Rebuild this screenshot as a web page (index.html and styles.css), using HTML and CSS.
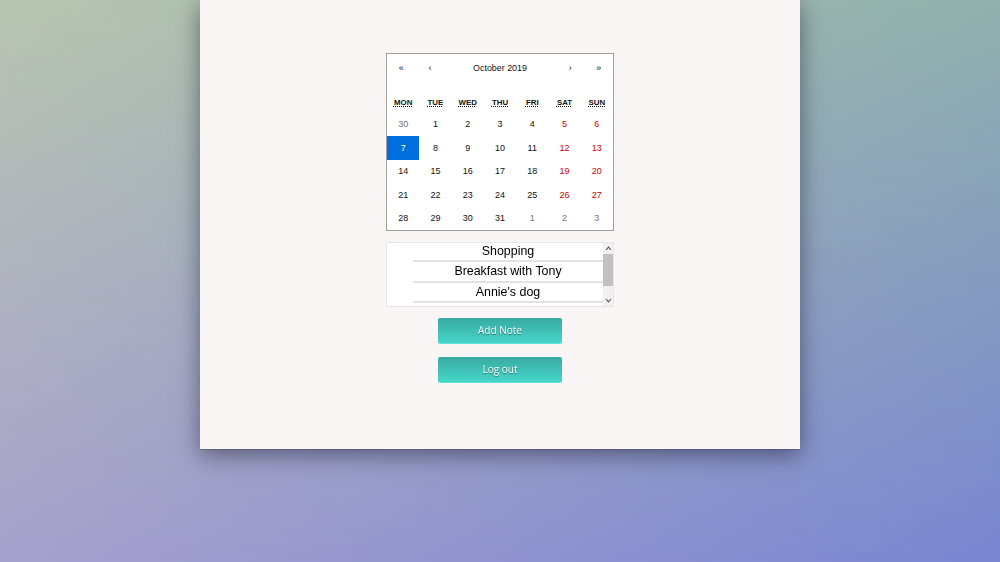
FILE: index.html
```html
<!DOCTYPE html>
<html lang="en">
<head>
<meta charset="utf-8">
<title>Notes Calendar</title>
<link rel="stylesheet" href="styles.css">
</head>
<body>
<main class="panel">
  <div class="calendar">
    <div class="cal-nav">
      <button class="nav-btn">«</button>
      <button class="nav-btn">‹</button>
      <button class="nav-label">October 2019</button>
      <button class="nav-btn">›</button>
      <button class="nav-btn">»</button>
    </div>
    <div class="weekdays">
      <div class="wd"><abbr title="Monday">Mon</abbr></div>
      <div class="wd"><abbr title="Tuesday">Tue</abbr></div>
      <div class="wd"><abbr title="Wednesday">Wed</abbr></div>
      <div class="wd"><abbr title="Thursday">Thu</abbr></div>
      <div class="wd"><abbr title="Friday">Fri</abbr></div>
      <div class="wd"><abbr title="Saturday">Sat</abbr></div>
      <div class="wd"><abbr title="Sunday">Sun</abbr></div>
    </div>
    <div class="days">
      <button class="tile other">30</button>
      <button class="tile">1</button>
      <button class="tile">2</button>
      <button class="tile">3</button>
      <button class="tile">4</button>
      <button class="tile weekend">5</button>
      <button class="tile weekend">6</button>

      <button class="tile active">7</button>
      <button class="tile">8</button>
      <button class="tile">9</button>
      <button class="tile">10</button>
      <button class="tile">11</button>
      <button class="tile weekend">12</button>
      <button class="tile weekend">13</button>

      <button class="tile">14</button>
      <button class="tile">15</button>
      <button class="tile">16</button>
      <button class="tile">17</button>
      <button class="tile">18</button>
      <button class="tile weekend">19</button>
      <button class="tile weekend">20</button>

      <button class="tile">21</button>
      <button class="tile">22</button>
      <button class="tile">23</button>
      <button class="tile">24</button>
      <button class="tile">25</button>
      <button class="tile weekend">26</button>
      <button class="tile weekend">27</button>

      <button class="tile">28</button>
      <button class="tile">29</button>
      <button class="tile">30</button>
      <button class="tile">31</button>
      <button class="tile other">1</button>
      <button class="tile other">2</button>
      <button class="tile other">3</button>
    </div>
  </div>

  <div class="notes">
    <ul class="note-list">
      <li class="note">Shopping</li>
      <li class="note">Breakfast with Tony</li>
      <li class="note">Annie's dog</li>
    </ul>
    <div class="scrollbar">
      <div class="sb-btn">
        <svg width="7" height="5" viewBox="0 0 7 5"><path d="M1 4 L3.5 1.2 L6 4" fill="none" stroke="#505050" stroke-width="1.1"/></svg>
      </div>
      <div class="sb-thumb"></div>
      <div class="sb-rest"></div>
      <div class="sb-btn">
        <svg width="7" height="5" viewBox="0 0 7 5"><path d="M1 1 L3.5 3.8 L6 1" fill="none" stroke="#505050" stroke-width="1.1"/></svg>
      </div>
    </div>
  </div>

  <button class="action">Add Note</button>
  <button class="action">Log out</button>
</main>
</body>
</html>
```

FILE: styles.css
```css
html {
  height: 100%;
  background: linear-gradient(to right, #a7a1cd, #7a86d2);
}

body {
  margin: 0;
  height: 562px;
  overflow: hidden;
  display: flex;
  justify-content: center;
  align-items: flex-start;
}

body::before {
  content: "";
  position: fixed;
  inset: 0;
  z-index: -1;
  background: linear-gradient(to right, #b8c5b0, #90b1ac);
  -webkit-mask-image: linear-gradient(to bottom, #000, transparent);
  mask-image: linear-gradient(to bottom, #000, transparent);
}

.panel {
  width: 600px;
  height: 449px;
  box-sizing: border-box;
  padding-top: 53px;
  background: #f9f6f5;
  box-shadow: 0 1px 0 rgba(60, 60, 90, 0.35), 0 6px 22px rgba(20, 20, 40, 0.5);
  display: flex;
  flex-direction: column;
  align-items: center;
}

/* Calendar */
.calendar {
  width: 228px;
  box-sizing: border-box;
  background: #fff;
  border: 1px solid #a0a096;
  font-family: "Liberation Sans", Arial, sans-serif;
}

.cal-nav {
  display: flex;
  height: 28.6px;
  margin-bottom: 10.4px;
}

.cal-nav button {
  border: 0;
  background: none;
  padding: 0;
  margin: 0;
  font-family: "Liberation Sans", Arial, sans-serif;
  font-size: 8.9px;
  color: #111;
}

.nav-btn {
  min-width: 28.6px;
}

.nav-label {
  flex: 1;
}

.weekdays {
  display: grid;
  grid-template-columns: repeat(7, 1fr);
  height: 19.9px;
}

.wd {
  display: flex;
  align-items: center;
  justify-content: center;
  font-size: 7.9px;
  font-weight: bold;
  text-transform: uppercase;
  color: #111;
}

.wd abbr {
  text-decoration: underline dotted;
  text-underline-offset: 1px;
}

.days {
  display: grid;
  grid-template-columns: repeat(7, 1fr);
}

.tile {
  height: 23.4px;
  border: 0;
  margin: 0;
  padding: 0;
  background: none;
  font-family: "Liberation Sans", Arial, sans-serif;
  font-size: 9px;
  line-height: 10.4px;
  color: #111;
  text-align: center;
}

.tile.weekend {
  color: #d10000;
}

.tile.other {
  color: #757575;
}

.tile.active {
  background: #006edc;
  color: #fff;
}

/* Notes list */
.notes {
  width: 228px;
  height: 65px;
  box-sizing: border-box;
  margin-top: 11px;
  background: #fff;
  border: 1px solid #e6e6e6;
  display: flex;
}

.note-list {
  flex: 1;
  margin: -1px 0 0;
  padding: 0 0 0 26px;
  list-style: none;
  overflow: hidden;
}

.note {
  font-family: "Liberation Sans", Arial, sans-serif;
  font-size: 12.4px;
  line-height: 18.5px;
  text-align: center;
  color: #000;
  border-bottom: 2px solid #e2e2e2;
}

.scrollbar {
  width: 10px;
  background: #f1f1f1;
  display: flex;
  flex-direction: column;
}

.sb-btn {
  height: 11px;
  display: flex;
  align-items: center;
  justify-content: center;
}

.sb-thumb {
  height: 32px;
  background: #c1c1c1;
}

.sb-rest {
  flex: 1;
}

/* Buttons */
.action {
  width: 124px;
  height: 26px;
  margin-top: 11px;
  border: 0;
  border-bottom: 1px solid #62e3d8;
  border-radius: 2px;
  background: linear-gradient(to bottom, #38aaa2, #48d6ca);
  color: #fff;
  font-family: "Open Sans", sans-serif;
  font-size: 10px;
  text-shadow: 0 1px 1px rgba(0, 0, 0, 0.45);
  padding: 0;
}

.action + .action {
  margin-top: 13px;
}
```
